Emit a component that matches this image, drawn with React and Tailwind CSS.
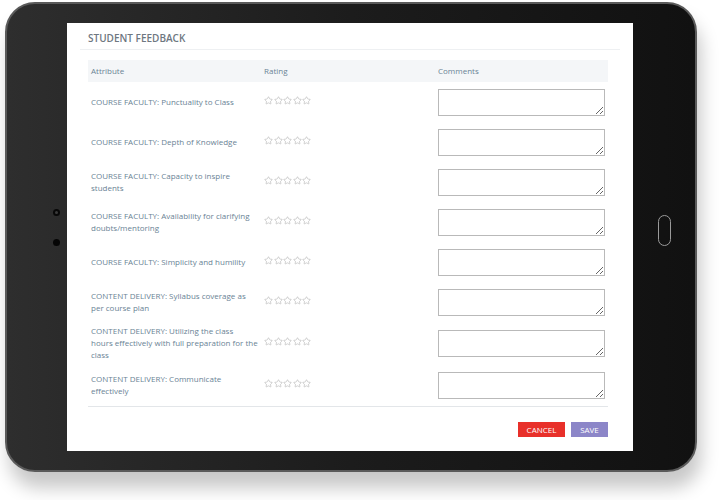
import { Star } from "lucide-react";

const ROWS = [
  { label: "COURSE FACULTY: Punctuality to Class", h: "h-[40px]" },
  { label: "COURSE FACULTY: Depth of Knowledge", h: "h-[40px]" },
  { label: "COURSE FACULTY: Capacity to inspire students", h: "h-[40px]" },
  { label: "COURSE FACULTY: Availability for clarifying doubts/mentoring", h: "h-[40px]" },
  { label: "COURSE FACULTY: Simplicity and humility", h: "h-[40px]" },
  { label: "CONTENT DELIVERY: Syllabus coverage as per course plan", h: "h-[40px]" },
  { label: ["CONTENT DELIVERY: Utilizing the class", "hours effectively with full preparation for the class"], h: "h-[42px]" },
  { label: "CONTENT DELIVERY: Communicate effectively", h: "h-[42px]" },
];

function Stars() {
  return (
    <div className="flex gap-[0.5px] -mt-[4px]">
      {[0, 1, 2, 3, 4].map((i) => (
        <Star key={i} size={9} strokeWidth={1.4} className="text-[#a9a9a9]" />
      ))}
    </div>
  );
}

export default function App() {
  return (
    <div className="w-[725px] h-[500px] bg-white overflow-hidden" style={{ fontFamily: "'Open Sans', sans-serif" }}>
      <div className="ml-[5px] mt-[2px] w-[692px] h-[470px] rounded-[30px] border-2 border-[#5a5a5a] bg-gradient-to-r from-[#2e2e2e] via-[#1c1c1c] to-[#111111] shadow-[4px_16px_18px_rgba(0,0,0,0.22)] flex">
        {/* left bezel */}
        <div className="w-[60px] flex flex-col items-end justify-center gap-[23px] pr-[7px] -mt-[20px]">
          <div className="w-[7px] h-[7px] rounded-full border-2 border-[#080808] bg-[#3a3a3a]" />
          <div className="w-[7px] h-[7px] rounded-full bg-[#050505]" />
        </div>

        {/* screen */}
        <div className="mt-[19px] w-[566px] h-[428px] bg-white flex flex-col">
          <div className="mx-[13px] pl-[8px] pt-[8px] h-[27px] border-b border-[#eef0f2]">
            <p className="text-[10px] font-semibold text-[#6e7781]">STUDENT FEEDBACK</p>
          </div>

          <div className="ml-[21px] w-[520px] mt-[10px]">
            <div className="flex items-center h-[22px] bg-[#f4f6f8] text-[8px] text-[#6a8395]">
              <div className="w-[176px] pl-[3px]">Attribute</div>
              <div className="w-[174px]">Rating</div>
              <div>Comments</div>
            </div>
            {ROWS.map((r, i) => (
              <div key={i} className={`flex items-center ${r.h}`}>
                <div className="w-[176px] pl-[3px] pr-[6px] text-[8px] leading-[12px] text-[#6a8395]">
                  {Array.isArray(r.label) ? (
                    <>
                      {r.label[0]}
                      <br />
                      {r.label[1]}
                    </>
                  ) : (
                    r.label
                  )}
                </div>
                <div className="w-[174px]">
                  <Stars />
                </div>
                <textarea className="w-[167px] h-[27px] border border-[#b9b9b9] bg-white outline-none" />
              </div>
            ))}
            <div className="border-t border-[#e3e6e9]" />
            <div className="flex justify-end gap-[6px] mt-[15px]">
              <button className="w-[47px] h-[15px] bg-[#e8302a] text-white text-[8px] leading-[15px]">CANCEL</button>
              <button className="w-[37px] h-[15px] bg-[#8c86c8] text-white text-[8px] leading-[15px]">SAVE</button>
            </div>
          </div>
        </div>

        {/* right bezel */}
        <div className="flex-1 flex items-center justify-center">
          <div className="w-[13px] h-[31px] rounded-full border-[1.5px] border-[#9a9a9a] -mt-[14px]" />
        </div>
      </div>
    </div>
  );
}
